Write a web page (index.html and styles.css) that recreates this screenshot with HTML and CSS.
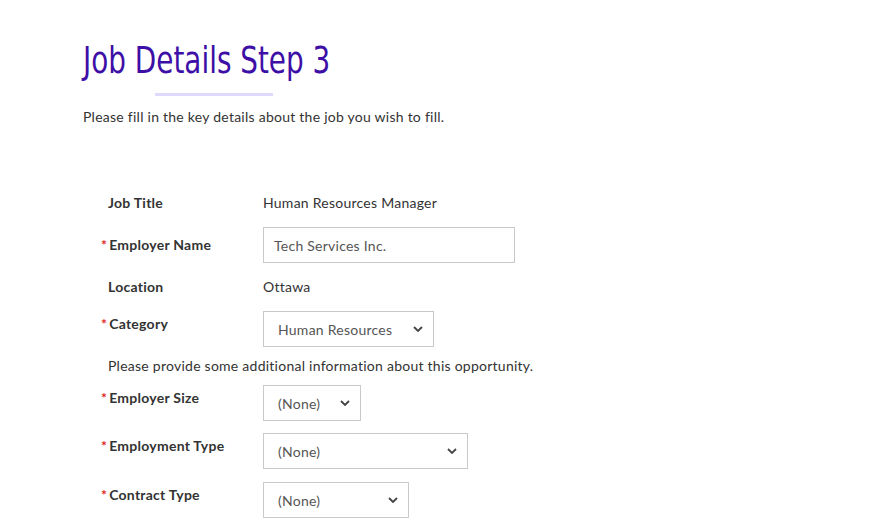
FILE: index.html
```html
<!DOCTYPE html>
<html lang="en">
<head>
<meta charset="utf-8">
<title>Job Details Step 3</title>
<link rel="stylesheet" href="styles.css">
</head>
<body>
<main class="page">
  <header class="intro">
    <h1 class="title">Job Details Step 3</h1>
    <div class="rule"></div>
    <p class="lead">Please fill in the key details about the job you wish to fill.</p>
  </header>
  <form class="form">
    <div class="row row-text">
      <div class="label">Job Title</div>
      <div class="value">Human Resources Manager</div>
    </div>
    <div class="row row-field r-employer">
      <div class="label req">Employer Name</div>
      <div class="input w-employer">Tech Services Inc.</div>
    </div>
    <div class="row row-text r-location">
      <div class="label">Location</div>
      <div class="value">Ottawa</div>
    </div>
    <div class="row row-field r-category">
      <div class="label req">Category</div>
      <div class="select w-category"><span>Human Resources</span><svg class="chev" viewBox="0 0 10 6" width="10" height="6"><path d="M1 1l4 4 4-4" fill="none" stroke="#444" stroke-width="1.8"/></svg></div>
    </div>
    <p class="help">Please provide some additional information about this opportunity.</p>
    <div class="row row-field r-size">
      <div class="label req">Employer Size</div>
      <div class="select w-size"><span>(None)</span><svg class="chev" viewBox="0 0 10 6" width="10" height="6"><path d="M1 1l4 4 4-4" fill="none" stroke="#444" stroke-width="1.8"/></svg></div>
    </div>
    <div class="row row-field r-emptype">
      <div class="label req">Employment Type</div>
      <div class="select w-emptype"><span>(None)</span><svg class="chev" viewBox="0 0 10 6" width="10" height="6"><path d="M1 1l4 4 4-4" fill="none" stroke="#444" stroke-width="1.8"/></svg></div>
    </div>
    <div class="row row-field r-contract">
      <div class="label req">Contract Type</div>
      <div class="select w-contract"><span>(None)</span><svg class="chev" viewBox="0 0 10 6" width="10" height="6"><path d="M1 1l4 4 4-4" fill="none" stroke="#444" stroke-width="1.8"/></svg></div>
    </div>
  </form>
</main>
</body>
</html>
```

FILE: styles.css
```css
* { box-sizing: border-box; }
html, body { margin: 0; padding: 0; background: #fff; }
body {
  font-family: "Lato", "Open Sans", sans-serif;
  font-size: 14px;
  letter-spacing: 0.25px;
  color: #333;
}
.page { padding: 38px 0 0 83px; }
.intro { display: flex; flex-direction: column; align-items: flex-start; }
.title {
  margin: 0;
  font-family: "DejaVu Sans Condensed", "DejaVu Sans", sans-serif;
  font-weight: 400;
  font-size: 38px;
  letter-spacing: 0;
  line-height: 44px;
  color: #3d0fa6;
  transform: scaleX(0.815);
  transform-origin: left center;
}
.rule {
  width: 118px;
  height: 3px;
  background: #e0d9fb;
  margin: 11px 0 0 72px;
}
.lead { margin: 11px 0 0; line-height: 20px; }
.form { margin-top: 66px; padding-left: 17px; }
.row { display: flex; align-items: flex-start; }
.label {
  width: 163px;
  padding-left: 8px;
  font-weight: 700;
  line-height: 20px;
  color: #333;
}
.label.req { padding-left: 1px; }
.label.req::before { content: "*"; color: #e0261b; margin-right: 2px; }
.row-text .value { line-height: 20px; }
.row-field .label { padding-top: 3px; }
.r-employer { margin-top: 14px; }
.r-employer .label { padding-top: 8px; }
.r-location { margin-top: 14px; }
.r-category { margin-top: 14px; }
.help { margin: 9px 0 0 8px; line-height: 20px; }
.r-size { margin-top: 9px; }
.r-emptype { margin-top: 12px; }
.r-contract { margin-top: 13px; }
.input, .select {
  height: 36px;
  border: 1px solid #c9c9c9;
  background: #fff;
  display: flex;
  align-items: center;
  padding: 0 10px 0 14px;
  color: #555;
}
.select { justify-content: space-between; }
.w-employer { width: 252px; padding-left: 10px; }
.w-category { width: 171px; }
.w-size { width: 98px; }
.w-emptype { width: 205px; }
.w-contract { width: 146px; }
.chev { display: block; flex: none; }
```
